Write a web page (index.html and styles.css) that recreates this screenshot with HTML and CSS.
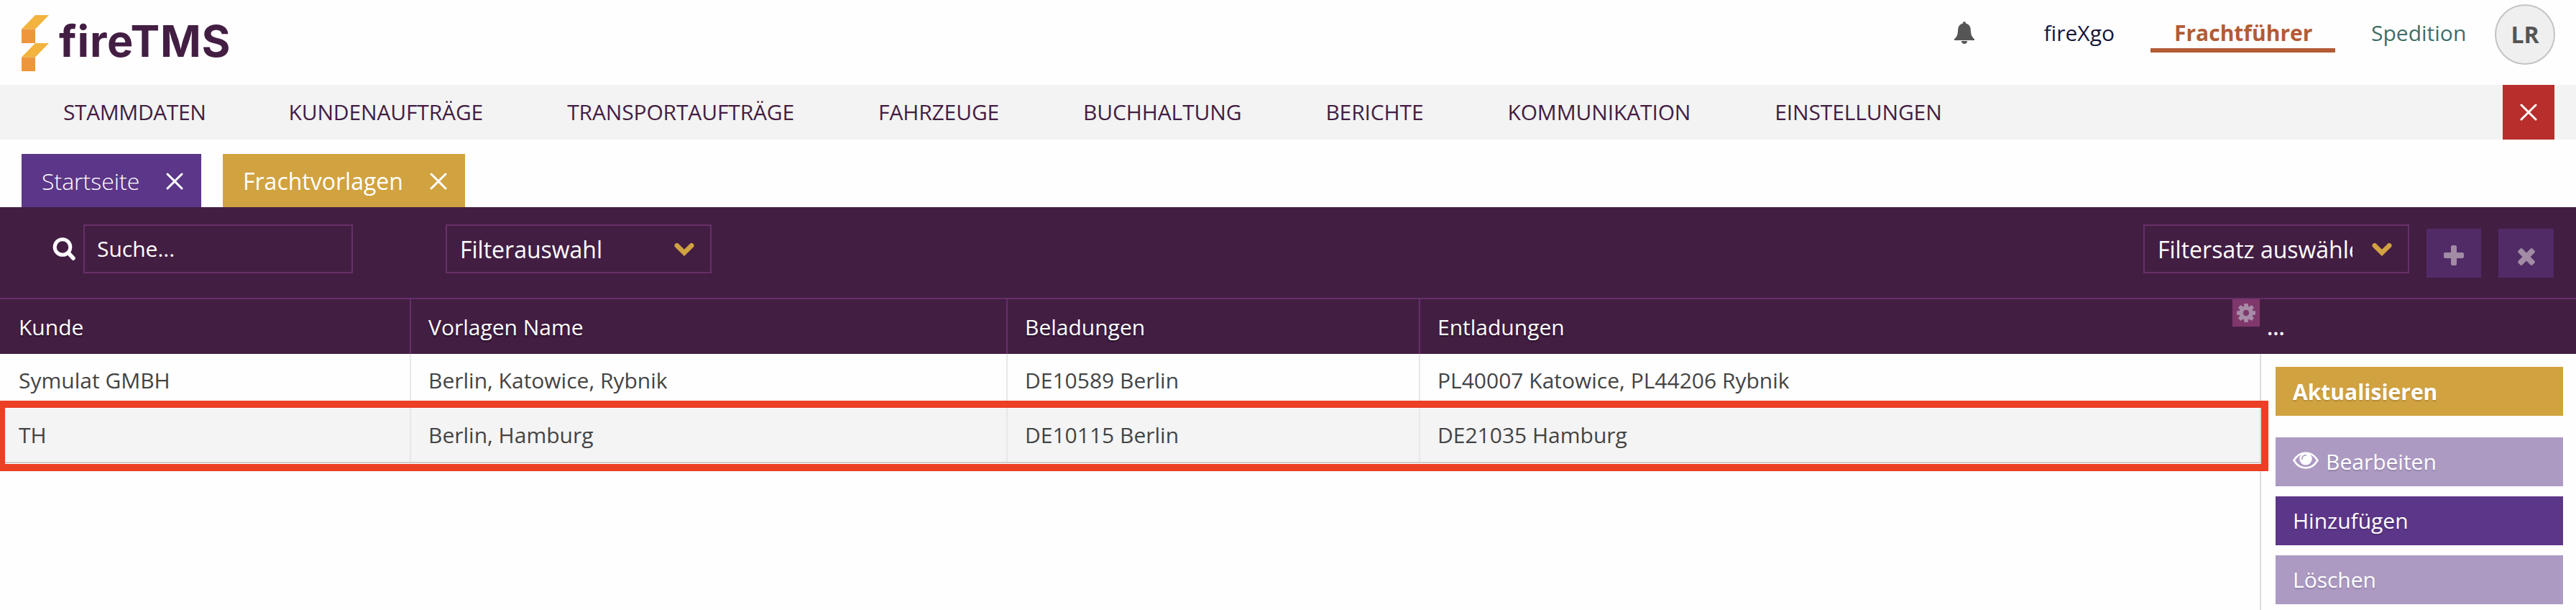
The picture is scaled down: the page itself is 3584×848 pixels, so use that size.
FILE: index.html
```html
<!DOCTYPE html>
<html lang="de">
<head>
<meta charset="utf-8">
<title>fireTMS – Frachtvorlagen</title>
<link rel="stylesheet" href="styles.css">
</head>
<body>
<header class="top">
  <div class="logo">
    <svg class="logo-mark" viewBox="0 0 38 78"><path fill="#f2b33f" d="M19 0h19L19 19.500H0zM19 39h19L19 58.500H0z"/><path fill="#ee963b" d="M0 19.500h19V39H0zM0 58.500h19V78H0z"/></svg>
    <span class="logo-name">fireTMS</span>
  </div>
  <div class="account">
    <svg class="bell" viewBox="0 0 28 31"><path fill="#555" d="M14 0c1.500 0 2 1.200 2 2.600 4.300 1 6.500 4.300 6.800 8.400.4 6.500.8 9.800 5.200 13.200V26H0v-1.800c4.400-3.400 4.800-6.700 5.200-13.200.3-4.100 2.500-7.400 6.800-8.400C12 1.200 12.500 0 14 0zM9.800 27h8.400c-.3 2.400-2 4-4.200 4s-3.900-1.600-4.200-4z"/></svg>
    <a class="mode mode-go">fireXgo</a>
    <a class="mode mode-active">Frachtführer</a>
    <a class="mode mode-sped">Spedition</a>
    <div class="avatar">LR</div>
  </div>
</header>

<nav class="menu">
  <a class="first">STAMMDATEN</a><a>KUNDENAUFTRÄGE</a><a>TRANSPORTAUFTRÄGE</a><a>FAHRZEUGE</a><a>BUCHHALTUNG</a><a>BERICHTE</a><a>KOMMUNIKATION</a><a>EINSTELLUNGEN</a>
  <button class="menu-close"><svg class="cross" viewBox="0 0 24 24"><path d="M2 2l20 20M22 2L2 22"/></svg></button>
</nav>

<div class="tabs">
  <div class="tab tab-home"><span>Startseite</span><svg class="cross" viewBox="0 0 24 24"><path d="M2 2l20 20M22 2L2 22"/></svg></div>
  <div class="tab tab-current"><span>Frachtvorlagen</span><svg class="cross" viewBox="0 0 24 24"><path d="M2 2l20 20M22 2L2 22"/></svg></div>
</div>

<section class="filters">
  <svg class="search-icon" viewBox="0 0 32 32"><circle cx="14" cy="13.500" r="10.800" fill="none" stroke="#fff" stroke-width="5"/><path d="M22 21.500l7 7.500" stroke="#fff" stroke-width="5.500" stroke-linecap="round"/></svg>
  <div class="field search">Suche...</div>
  <div class="field select"><span class="select-text">Filterauswahl</span><svg class="chevron" viewBox="0 0 28 18"><path d="M3.800 3.300L14 13.300 24.200 3.300"/></svg></div>
  <div class="filter-set">
    <div class="field select"><span class="select-text">Filtersatz auswählen</span><svg class="chevron" viewBox="0 0 28 18"><path d="M3.800 3.300L14 13.300 24.200 3.300"/></svg></div>
    <button class="square"><svg class="glyph" viewBox="0 0 28 28"><rect x="10" y="0" width="8" height="28" rx="2"/><rect x="0" y="10" width="28" height="8" rx="2"/></svg></button>
    <button class="square square-last"><svg class="glyph glyph-remove" viewBox="0 0 28 28"><g transform="rotate(45 14 14)"><rect x="10" y="0" width="8" height="28" rx="2"/><rect x="0" y="10" width="28" height="8" rx="2"/></g></svg></button>
  </div>
</section>

<main class="content">
  <div class="grid">
    <div class="row head">
      <div class="cell">Kunde</div><div class="cell">Vorlagen Name</div><div class="cell">Beladungen</div><div class="cell">Entladungen</div>
      <div class="gear-box"><svg class="gear" viewBox="0 0 26 26"><g fill="#a78ca8"><circle cx="13" cy="13" r="9.800"/><g><rect x="10.200" y="0" width="5.600" height="26" rx="1"/><rect x="0" y="10.200" width="26" height="5.600" rx="1"/></g><g transform="rotate(45 13 13)"><rect x="10.200" y="0" width="5.600" height="26" rx="1"/><rect x="0" y="10.200" width="26" height="5.600" rx="1"/></g></g><circle cx="13" cy="13" r="4.200" fill="#80386c"/></svg></div>
    </div>
    <div class="row">
      <div class="cell">Symulat GMBH</div><div class="cell">Berlin, Katowice, Rybnik</div><div class="cell">DE10589 Berlin</div><div class="cell">PL40007 Katowice, PL44206 Rybnik</div>
    </div>
    <div class="row selected">
      <div class="cell">TH</div><div class="cell">Berlin, Hamburg</div><div class="cell">DE10115 Berlin</div><div class="cell">DE21035 Hamburg</div>
      <div class="marker"></div>
    </div>
  </div>
  <aside class="side">
    <div class="side-head">...</div>
    <div class="actions">
      <button class="action refresh">Aktualisieren</button>
      <button class="action muted"><svg class="eye" viewBox="0 0 36 24"><path fill="none" stroke="#fff" stroke-width="2.600" d="M1.500 12C5.500 5.500 11 1.500 18 1.500S30.500 5.500 34.500 12C30.500 18.500 25 22.500 18 22.500S5.500 18.500 1.500 12z"/><circle cx="18" cy="9.800" r="8.700" fill="#fff"/><path d="M12.800 10.200c0-3.200 2.200-5.300 5.200-5.300" fill="none" stroke="#ac9ac3" stroke-width="1.700" stroke-linecap="round"/></svg><span>Bearbeiten</span></button>
      <button class="action add">Hinzufügen</button>
      <button class="action muted">Löschen</button>
    </div>
  </aside>
</main>
</body>
</html>
```
FILE: styles.css
```css
* { box-sizing: border-box; }
body {
  margin: 0;
  width: 3584px;
  height: 848px;
  overflow: hidden;
  background: #fefefe;
  color: #444;
  font: 30px/40px "Open Sans", "Noto Sans", sans-serif;
}
button { border: 0; padding: 0; font: inherit; color: inherit; }
svg { display: block; flex: none; }

.top { display: flex; justify-content: space-between; height: 118px; padding: 0 29px 0 30px; }
.logo { display: flex; align-items: flex-start; padding-top: 21px; }
.logo-mark { width: 38px; height: 78px; }
.logo-name {
  margin: 0 0 0 14px;
  color: #431e43;
  font: 700 61px/73px Inter, sans-serif;
  letter-spacing: 0.8px;
}
.account { display: flex; align-items: flex-start; padding-top: 6px; }
.bell { width: 28px; height: 31px; margin: 24px 64px 0 0; }
.mode { height: 67px; padding: 20px 33px 0; }
.mode-go { color: #17153a; }
.mode-active { width: 257px; margin-left: 17px; color: #b35b35; font-weight: 700; border-bottom: 6px solid #b35b35; white-space: nowrap; }
.mode-sped { width: 205px; margin: 0 0 0 17px; color: #3f6f66; }
.avatar {
  width: 84px;
  height: 84px;
  border: 2px solid #c4c4c4;
  border-radius: 50%;
  background: #efefef;
  color: #555;
  font: 700 32px/80px "Open Sans", sans-serif;
  text-align: center;
}

.menu { display: flex; height: 76px; padding: 0 30px 0 88px; gap: 117px; background: #f3f3f3; color: #431e43; line-height: 76px; letter-spacing: -0.14px; }
.menu .first { margin-right: -2px; letter-spacing: -0.4px; }
.menu-close { display: flex; align-items: center; justify-content: center; width: 72px; margin-left: auto; background: #b82e2c; }
.cross { width: 24px; height: 24px; fill: none; stroke: #fff; stroke-width: 3; stroke-linecap: round; }

.tabs { display: flex; gap: 30px; height: 94px; padding: 20px 30px 0; font-size: 32px; color: #fff; }
.tab { display: flex; align-items: center; justify-content: space-between; padding: 1px 25px 0 28px; }
.tab-home { width: 250px; background: #5c3688; font-weight: 300; }
.tab-current { width: 337px; background: #d1a240; }

.filters { display: flex; align-items: flex-start; height: 128px; padding: 24px 31px 0 73px; background: #431e43; border-bottom: 2px solid #663068; color: #fff; }
.search-icon { width: 32px; height: 32px; margin: 18px 11px 0 0; }
.field { display: flex; align-items: center; height: 68px; border: 2px solid #663068; }
.search { width: 375px; padding-left: 17px; margin-right: 129px; }
.select { width: 370px; padding: 2px 22px 0 18px; font-size: 32px; }
.select-text { flex: 1; min-width: 0; overflow: hidden; white-space: nowrap; line-height: 48px; }
.chevron { width: 28px; height: 18px; margin-left: 27px; fill: none; stroke: #d1a240; stroke-width: 6.6; stroke-linecap: round; }
.filter-set { display: flex; gap: 24px; margin-left: auto; }
.square { display: flex; align-items: center; justify-content: center; width: 76px; height: 68px; margin-top: 6px; background: #502b66; }
.square-last { width: 77px; }
.glyph { width: 28px; height: 28px; margin-top: 5px; fill: #a28ba4; }
.glyph-remove { margin-top: 10px; }

.content { display: flex; height: 432px; }
.grid { width: 3146px; border-right: 2px solid #ddd; }
.row { position: relative; display: grid; grid-template-columns: 572px 830px 574px 1fr; height: 76px; }
.cell { padding: 17px 0 0 24px; border-right: 2px solid #e8e8e8; white-space: nowrap; }
.cell:first-child { padding-left: 26px; }
.cell:nth-child(4) { border-right: 0; }
.head { margin-right: -2px; background: #431e43; color: #fff; text-shadow: 0 2px 2px rgba(0, 0, 0, .4); }
.head .cell { padding-top: 19px; border-color: #663068; }
.selected { background: #f4f4f4; border-bottom: 2px solid #d2cccb; }
.gear-box { position: absolute; right: 2px; top: 0; display: flex; align-items: center; justify-content: center; width: 38px; height: 38px; background: #80386c; }
.gear { width: 26px; height: 26px; }
.marker { position: absolute; left: 0; top: -11px; width: 3156px; height: 98px; border: 10px solid #eb4025; border-left-width: 7px; }

.side { flex: 1; }
.side-head { height: 76px; padding: 19px 0 0 8px; background: #431e43; color: #fff; font-weight: 600; }
.actions { display: flex; flex-direction: column; gap: 14px; padding: 18px 18px 0 20px; }
.action { display: flex; align-items: center; gap: 10px; height: 68px; padding: 0 0 0 24px; color: #fff; text-shadow: 0 2px 2px rgba(0, 0, 0, .15); }
.refresh { margin-bottom: 16px; padding-top: 1px; background: #d1a240; font-weight: 700; }
.muted { background: #ac9ac3; }
.add { background: #5c3688; }
.eye { width: 36px; height: 24px; margin-bottom: 5px; }
```
